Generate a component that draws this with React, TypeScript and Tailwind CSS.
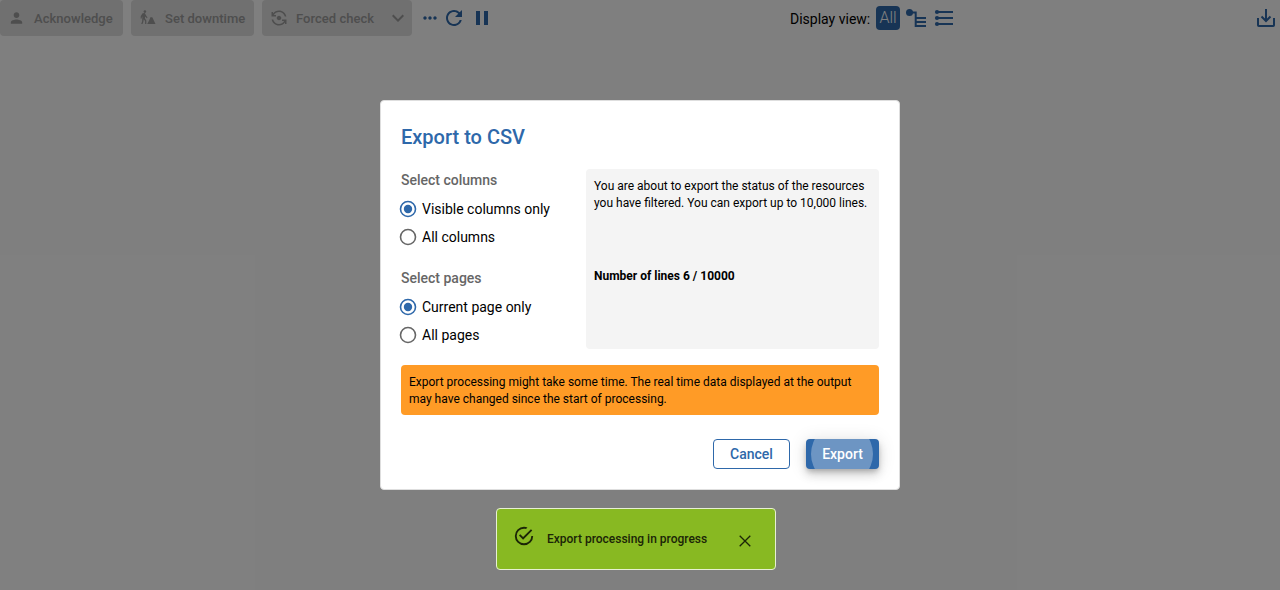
import type { ReactNode } from 'react';
import { MdExpandMore, MdFlipCameraAndroid, MdMoreHoriz, MdPause, MdPerson, MdRefresh } from 'react-icons/md';

function WorkerIcon() {
  return (
    <svg width="16" height="16" viewBox="0 0 16 16" fill="currentColor">
      <circle cx="4.9" cy="1.6" r="1.3" />
      <path d="M2.6 3.2 4.8 3l1.3 2.4 1.4 2.2-.6.6L5 6.4V8.6l1.3 1.8v3.6H5.1v-3.1L3.7 9.3l-.4 2.6-.8 2.1H1.2l.9-2.5.2-3.4.1-1.6-.5.4-.2 1.6-1.1-.1.2-2.4z" />
      <path d="M10.4 7.2h1.9l1.2 2.5L15.5 14H7.2l1.9-3.6z" />
    </svg>
  );
}

function TreeIcon() {
  return (
    <svg width="22" height="20" viewBox="0 0 22 20" fill="none" stroke="currentColor" strokeWidth="2">
      <circle cx="4.5" cy="4.5" r="3.5" fill="currentColor" stroke="none" />
      <path d="M4.5 4.5h6.2V19M10 10h11M10 14h11M10 18h11" />
    </svg>
  );
}

function ListIcon() {
  return (
    <svg width="20" height="18" viewBox="0 0 20 18" fill="currentColor">
      <circle cx="3" cy="3" r="2.1" />
      <circle cx="3" cy="9" r="2.1" />
      <circle cx="3" cy="15" r="2.1" />
      <path d="M3 2h16v2H3zM3 8h16v2H3zM3 14h16v2H3z" />
    </svg>
  );
}

function DownloadIcon() {
  return (
    <svg width="20" height="20" viewBox="0 0 20 20" fill="none" stroke="currentColor" strokeWidth="2">
      <path d="M2 10v7.2q0 .8.8.8h14.4q.8 0 .8-.8V10M10 1v12M5.5 8.5 10 13l4.5-4.5" />
    </svg>
  );
}

function SuccessIcon() {
  return (
    <svg width="22" height="22" viewBox="0 0 24 24" fill="currentColor">
      <path d="M20,12A8,8 0 0,1 12,20A8,8 0 0,1 4,12A8,8 0 0,1 12,4C12.76,4 13.5,4.11 14.2,4.31L15.77,2.74C14.61,2.26 13.34,2 12,2A10,10 0 0,0 2,12A10,10 0 0,0 12,22A10,10 0 0,0 22,12M7.91,10.08L6.5,11.5L11,16L21,6L19.59,4.58L11,13.17L7.91,10.08Z" />
    </svg>
  );
}

function ToolButton({ icon, label, className, children }: { icon: ReactNode; label: string; className: string; children?: ReactNode }) {
  return (
    <button disabled className={`flex h-9 items-center rounded bg-[#e0e0e0] text-[13px] font-medium text-[#9c9c9c] ${className}`}>
      <span className="flex w-[17px] shrink-0 justify-center">{icon}</span>
      <span className="ml-[9px] pt-0.5 tracking-[0.03px] whitespace-nowrap">{label}</span>
      {children}
    </button>
  );
}

function Toolbar() {
  return (
    <div className="flex h-9 items-center text-[#2e68aa]">
      <ToolButton icon={<MdPerson size={18} />} label="Acknowledge" className="w-[123px] pl-2" />
      <ToolButton icon={<WorkerIcon />} label="Set downtime" className="ml-2 w-[123px] pl-2" />
      <ToolButton icon={<MdFlipCameraAndroid size={18} className="shrink-0" />} label="Forced check" className="ml-2 w-[150px] pl-2">
        <MdExpandMore size={24} className="mr-0.5 ml-auto" />
      </ToolButton>
      <MdMoreHoriz size={20} className="ml-2" />
      <MdRefresh size={24} className="ml-0.5" />
      <MdPause size={24} className="ml-1" />
      <div className="ml-[296px] flex items-center">
        <span className="w-[86px] pt-0.5 text-sm text-black">Display view:</span>
        <span className="flex size-6 items-center justify-center rounded bg-[#2e68aa] text-base font-light text-white">All</span>
        <span className="ml-[5px]"><TreeIcon /></span>
        <span className="ml-[7px]"><ListIcon /></span>
      </div>
      <span className="mr-1 ml-auto"><DownloadIcon /></span>
    </div>
  );
}

function Radio({ label, checked = false }: { label: string; checked?: boolean }) {
  return (
    <label className="flex h-7 items-center">
      <svg width="18" height="18" viewBox="0 0 18 18" className={checked ? '-ml-0.5 text-[#2e68aa]' : '-ml-0.5 text-[#666666]'}>
        <circle cx="9" cy="9" r="7.5" fill="none" stroke="currentColor" strokeWidth="1.6" />
        {checked && <circle cx="9" cy="9" r="4.2" fill="currentColor" />}
      </svg>
      <span className="ml-[5px] text-sm text-black">{label}</span>
    </label>
  );
}

function ExportDialog() {
  return (
    <div role="dialog" className="flex h-[390px] w-[520px] flex-col rounded border border-[#dedede] bg-white px-5 pt-[21px]">
      <h2 className="h-[47px] text-xl leading-[31px] font-medium text-[#2e68aa]">Export to CSV</h2>
      <div className="flex h-[180px] justify-between">
        <div>
          <h3 className="h-[26px] text-sm leading-[23px] font-medium text-[#666666]">Select columns</h3>
          <Radio label="Visible columns only" checked />
          <Radio label="All columns" />
          <h3 className="mt-4 h-[26px] text-sm leading-[23px] font-medium text-[#666666]">Select pages</h3>
          <Radio label="Current page only" checked />
          <Radio label="All pages" />
        </div>
        <div className="w-[293px] rounded bg-[#f4f4f4] px-2 pt-[9px] text-xs leading-[17px] whitespace-nowrap text-black">
          <p>You are about to export the status of the resources<br />you have filtered. You can export up to 10,000 lines.</p>
          <p className="mt-14 font-bold">Number of lines 6 / 10000</p>
        </div>
      </div>
      <div className="mt-4 h-[50px] rounded bg-[#ff9b26] px-2 pt-[9px] text-xs leading-[17px] whitespace-nowrap text-black">
        Export processing might take some time. The real time data displayed at the output<br />may have changed since the start of processing.
      </div>
      <div className="mt-6 flex h-[30px] justify-end gap-4 text-sm font-medium">
        <button className="w-[77px] rounded border border-[#2e68aa] text-[#2e68aa]">Cancel</button>
        <button className="flex w-[73px] rounded bg-[#2e68aa] text-white shadow-[0_3px_5px_-1px_rgba(0,0,0,0.2),0_6px_10px_0_rgba(0,0,0,0.14),0_1px_18px_0_rgba(0,0,0,0.12)]">
          <span className="relative flex h-full w-full items-center justify-center overflow-hidden rounded">
            <span className="absolute -top-4 left-[5px] size-[62px] rounded-full bg-white/30" />
            <span className="relative">Export</span>
          </span>
        </button>
      </div>
    </div>
  );
}

function Toast() {
  return (
    <div role="status" className="absolute top-[508px] left-[496px] flex h-[62px] w-[280px] items-center rounded border border-[#e7f0d3] bg-[#88b922] pl-4 text-xs font-medium text-[#1b2507]">
      <span className="mb-[6px]"><SuccessIcon /></span>
      <span className="ml-3">Export processing in progress</span>
      <svg width="12" height="12" viewBox="0 0 12 12" className="mt-1 mr-6 ml-auto" fill="none" stroke="currentColor" strokeWidth="1.3">
        <path d="m.7.7 10.6 10.6M11.3.7.7 11.3" />
      </svg>
    </div>
  );
}

export default function App() {
  return (
    <div className="relative h-[590px] w-[1280px] overflow-hidden bg-white font-[Roboto,sans-serif]">
      <Toolbar />
      <div className="absolute inset-0 flex items-center justify-center bg-black/50">
        <ExportDialog />
      </div>
      <Toast />
    </div>
  );
}
